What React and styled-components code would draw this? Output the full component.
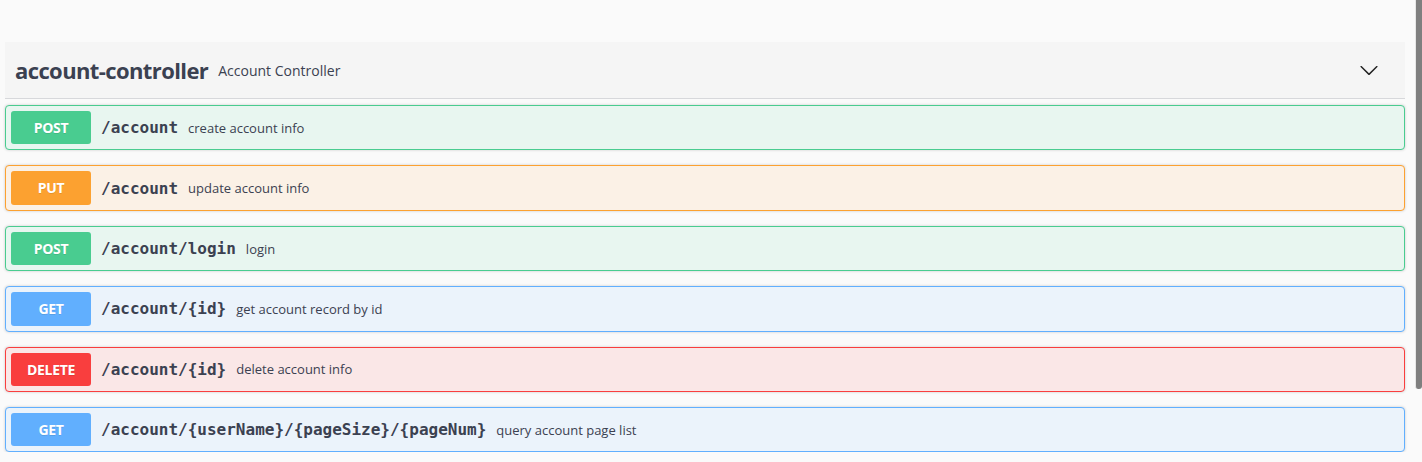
import React from 'react'
import styled, { createGlobalStyle } from 'styled-components';

const GlobalStyle = createGlobalStyle`
    html, body {
        margin: 0;
        padding: 0;
        background: #fafafa;
        overflow: hidden;
    }
`;

const methodColors = {
    post: { main: '#49cc90', bg: '#e8f6f0' },
    put: { main: '#fca130', bg: '#fbf1e6' },
    get: { main: '#61affe', bg: '#ebf3fb' },
    delete: { main: '#f93e3e', bg: '#fae7e7' },
};

const Page = styled.div`
    width: 1400px;
    padding: 42px 0 0 5px;
    font-family: "Open Sans", sans-serif;
    color: #3b4151;
`;
const TagHeader = styled.div`
    display: flex;
    align-items: center;
    height: 56px;
    padding: 0 20px 0 10px;
    background: #f5f5f5;
    border-bottom: 1px solid #d7d8db;
    margin-bottom: 6px;
`;
const TagTitle = styled.span`
    font-family: "Open Sans", sans-serif;
    font-size: 22px;
    font-weight: 700;
    letter-spacing: -0.6px;
    color: #3b4151;
`;
const TagDesc = styled.span`
    flex: 1;
    padding: 0 10px;
    font-size: 14px;
    color: #3b4151;
`;
const Toggle = styled.button`
    border: none;
    background: none;
    padding: 0;
    width: 20px;
    height: 20px;
    display: flex;
    margin-right: 6px;
`;
const List = styled.div`
    display: flex;
    flex-direction: column;
    gap: 15px;
`;
const Block = styled.div`
    display: flex;
    align-items: center;
    padding: 5px;
    border: 1px solid ${({ $method }) => methodColors[$method].main};
    background: ${({ $method }) => methodColors[$method].bg};
    border-radius: 4px;
    box-shadow: 0 0 3px rgba(0, 0, 0, 0.19);
`;
const Badge = styled.span`
    min-width: 80px;
    padding: 6px 0;
    line-height: 21.4px;
    text-align: center;
    font-size: 14px;
    font-weight: 700;
    letter-spacing: -0.3px;
    color: #fff;
    border-radius: 3px;
    background: ${({ $method }) => methodColors[$method].main};
    text-shadow: 0 1px 0 rgba(0, 0, 0, 0.1);
`;
const Path = styled.span`
    padding: 0 10px;
    font-family: "DejaVu Sans Mono", monospace;
    font-size: 16px;
    font-weight: 700;
    color: #3b4151;
`;
const Summary = styled.span`
    font-size: 13px;
    color: #3b4151;
`;
const Scrollbar = styled.div`
    position: fixed;
    top: 0;
    right: 0;
    width: 6px;
    height: 389px;
    background: #7f7f7f;
    border-radius: 0 0 3px 3px;
    border-left: 1px solid #e6e6e6;
`;

const ops = [
    { method: 'post', path: '/account', summary: 'create account info' },
    { method: 'put', path: '/account', summary: 'update account info' },
    { method: 'post', path: '/account/login', summary: 'login' },
    { method: 'get', path: '/account/{id}', summary: 'get account record by id' },
    { method: 'delete', path: '/account/{id}', summary: 'delete account info' },
    { method: 'get', path: '/account/{userName}/{pageSize}/{pageNum}', summary: 'query account page list' },
];

const App = () => {
    return (
        <>
            <GlobalStyle />
            <Page>
                <TagHeader>
                    <TagTitle>account-controller</TagTitle>
                    <TagDesc>Account Controller</TagDesc>
                    <Toggle>
                        <svg width="20" height="20" viewBox="0 0 20 20">
                            <path fill="#222" d="M17.418 6.109c.272-.268.709-.268.979 0s.271.701 0 .969l-7.908 7.83c-.27.268-.707.268-.979 0l-7.908-7.830c-.27-.268-.27-.701 0-.969.271-.268.709-.268.979 0L10 13.25l7.418-7.141z" />
                        </svg>
                    </Toggle>
                </TagHeader>
                <List>
                    {ops.map((op, i) => (
                        <Block key={i} $method={op.method}>
                            <Badge $method={op.method}>{op.method.toUpperCase()}</Badge>
                            <Path>{op.path}</Path>
                            <Summary>{op.summary}</Summary>
                        </Block>
                    ))}
                </List>
            </Page>
            <Scrollbar />
        </>
    )
}

export default App
